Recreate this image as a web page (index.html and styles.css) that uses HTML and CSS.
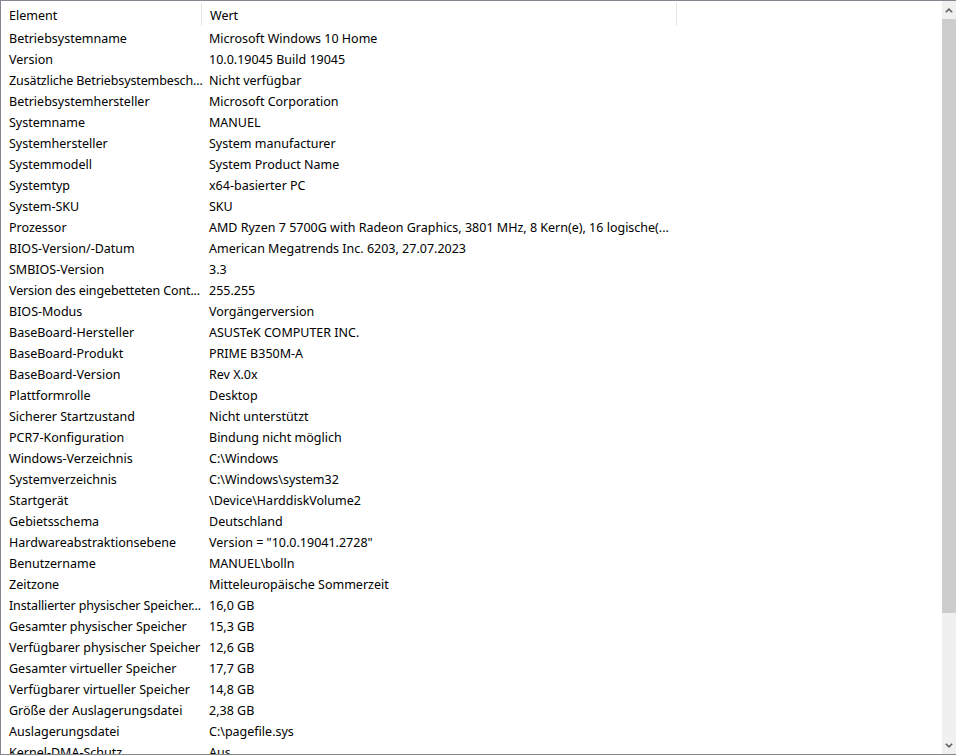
FILE: index.html
```html
<!DOCTYPE html>
<html lang="de">
<head>
<meta charset="utf-8">
<title>Systeminformationen</title>
<link rel="stylesheet" href="styles.css">
</head>
<body>
<div class="frame">
  <div class="list">
    <div class="header">
      <div class="hcell c1">Element</div>
      <div class="hcell c2">Wert</div>
      <div class="hcell c3"></div>
    </div>
    <div class="rows">
      <div class="row"><span class="c1">Betriebsystemname</span><span class="c2">Microsoft Windows 10 Home</span></div>
      <div class="row"><span class="c1">Version</span><span class="c2">10.0.19045 Build 19045</span></div>
      <div class="row"><span class="c1 trunc">Zusätzliche Betriebsystembesch...</span><span class="c2">Nicht verfügbar</span></div>
      <div class="row"><span class="c1">Betriebsystemhersteller</span><span class="c2">Microsoft Corporation</span></div>
      <div class="row"><span class="c1">Systemname</span><span class="c2">MANUEL</span></div>
      <div class="row"><span class="c1">Systemhersteller</span><span class="c2">System manufacturer</span></div>
      <div class="row"><span class="c1">Systemmodell</span><span class="c2">System Product Name</span></div>
      <div class="row"><span class="c1">Systemtyp</span><span class="c2">x64-basierter PC</span></div>
      <div class="row"><span class="c1">System-SKU</span><span class="c2">SKU</span></div>
      <div class="row"><span class="c1">Prozessor</span><span class="c2">AMD Ryzen 7 5700G with Radeon Graphics, 3801 MHz, 8 Kern(e), 16 logische(...</span></div>
      <div class="row"><span class="c1">BIOS-Version/-Datum</span><span class="c2">American Megatrends Inc. 6203, 27.07.2023</span></div>
      <div class="row"><span class="c1">SMBIOS-Version</span><span class="c2">3.3</span></div>
      <div class="row"><span class="c1 trunc">Version des eingebetteten Cont...</span><span class="c2">255.255</span></div>
      <div class="row"><span class="c1">BIOS-Modus</span><span class="c2">Vorgängerversion</span></div>
      <div class="row"><span class="c1">BaseBoard-Hersteller</span><span class="c2">ASUSTeK COMPUTER INC.</span></div>
      <div class="row"><span class="c1">BaseBoard-Produkt</span><span class="c2">PRIME B350M-A</span></div>
      <div class="row"><span class="c1">BaseBoard-Version</span><span class="c2">Rev X.0x</span></div>
      <div class="row"><span class="c1">Plattformrolle</span><span class="c2">Desktop</span></div>
      <div class="row"><span class="c1">Sicherer Startzustand</span><span class="c2">Nicht unterstützt</span></div>
      <div class="row"><span class="c1">PCR7-Konfiguration</span><span class="c2">Bindung nicht möglich</span></div>
      <div class="row"><span class="c1">Windows-Verzeichnis</span><span class="c2">C:\Windows</span></div>
      <div class="row"><span class="c1">Systemverzeichnis</span><span class="c2">C:\Windows\system32</span></div>
      <div class="row"><span class="c1">Startgerät</span><span class="c2">\Device\HarddiskVolume2</span></div>
      <div class="row"><span class="c1">Gebietsschema</span><span class="c2">Deutschland</span></div>
      <div class="row"><span class="c1">Hardwareabstraktionsebene</span><span class="c2">Version = "10.0.19041.2728"</span></div>
      <div class="row"><span class="c1">Benutzername</span><span class="c2">MANUEL\bolln</span></div>
      <div class="row"><span class="c1">Zeitzone</span><span class="c2">Mitteleuropäische Sommerzeit</span></div>
      <div class="row"><span class="c1 trunc">Installierter physischer Speicher...</span><span class="c2">16,0 GB</span></div>
      <div class="row"><span class="c1">Gesamter physischer Speicher</span><span class="c2">15,3 GB</span></div>
      <div class="row"><span class="c1">Verfügbarer physischer Speicher</span><span class="c2">12,6 GB</span></div>
      <div class="row"><span class="c1">Gesamter virtueller Speicher</span><span class="c2">17,7 GB</span></div>
      <div class="row"><span class="c1">Verfügbarer virtueller Speicher</span><span class="c2">14,8 GB</span></div>
      <div class="row"><span class="c1">Größe der Auslagerungsdatei</span><span class="c2">2,38 GB</span></div>
      <div class="row"><span class="c1">Auslagerungsdatei</span><span class="c2">C:\pagefile.sys</span></div>
      <div class="row"><span class="c1">Kernel-DMA-Schutz</span><span class="c2">Aus</span></div>
    </div>
  </div>
  <div class="scrollbar">
    <div class="arrow">
      <svg width="8" height="5" viewBox="0 0 8 5"><path d="M0.8 4.3 L4 1.2 L7.2 4.3" fill="none" stroke="#606060" stroke-width="1.6"/></svg>
    </div>
    <div class="track">
      <div class="thumb"></div>
    </div>
    <div class="arrow">
      <svg width="8" height="5" viewBox="0 0 8 5"><path d="M0.8 0.7 L4 3.8 L7.2 0.7" fill="none" stroke="#606060" stroke-width="1.6"/></svg>
    </div>
  </div>
</div>
</body>
</html>
```

FILE: styles.css
```css
html, body {
  margin: 0;
  padding: 0;
  background: #ffffff;
}

.frame {
  width: 955px;
  height: 753px;
  border-top: 1px solid #828790;
  border-left: 1px solid #828790;
  border-bottom: 1px solid #828790;
  display: flex;
  overflow: hidden;
  font-family: "Segoe UI", "Noto Sans", "Open Sans", sans-serif;
  font-size: 12.5px;
  color: #000000;
}

.list {
  flex: 1;
  overflow: hidden;
  background: #ffffff;
}

.header {
  display: flex;
  height: 27px;
  align-items: center;
}

.hcell {
  height: 23px;
  line-height: 25px;
  padding-left: 8px;
  box-sizing: border-box;
  border-right: 1px solid #e5e5e5;
  white-space: nowrap;
}

.hcell.c3 {
  border-right: none;
  flex: 1;
}

.c1 {
  width: 201px;
}

.c2 {
  width: 475px;
}

.rows {
  display: flex;
  flex-direction: column;
}

.row {
  display: flex;
  height: 21px;
  line-height: 21px;
  white-space: nowrap;
}

.row span {
  overflow: hidden;
  box-sizing: border-box;
  padding-left: 8px;
}

.row .c1 {
  overflow: visible;
}

.row .trunc {
  letter-spacing: -0.12px;
}

.row .c2 {
  padding-left: 7px;
}

.scrollbar {
  width: 14px;
  flex: none;
  background: #f0f0f0;
  display: flex;
  flex-direction: column;
}

.arrow {
  height: 18px;
  display: flex;
  align-items: center;
  justify-content: center;
  flex: none;
}

.track {
  flex: 1;
  display: flex;
  flex-direction: column;
}

.thumb {
  height: 594px;
  background: #cdcdcd;
}
```
